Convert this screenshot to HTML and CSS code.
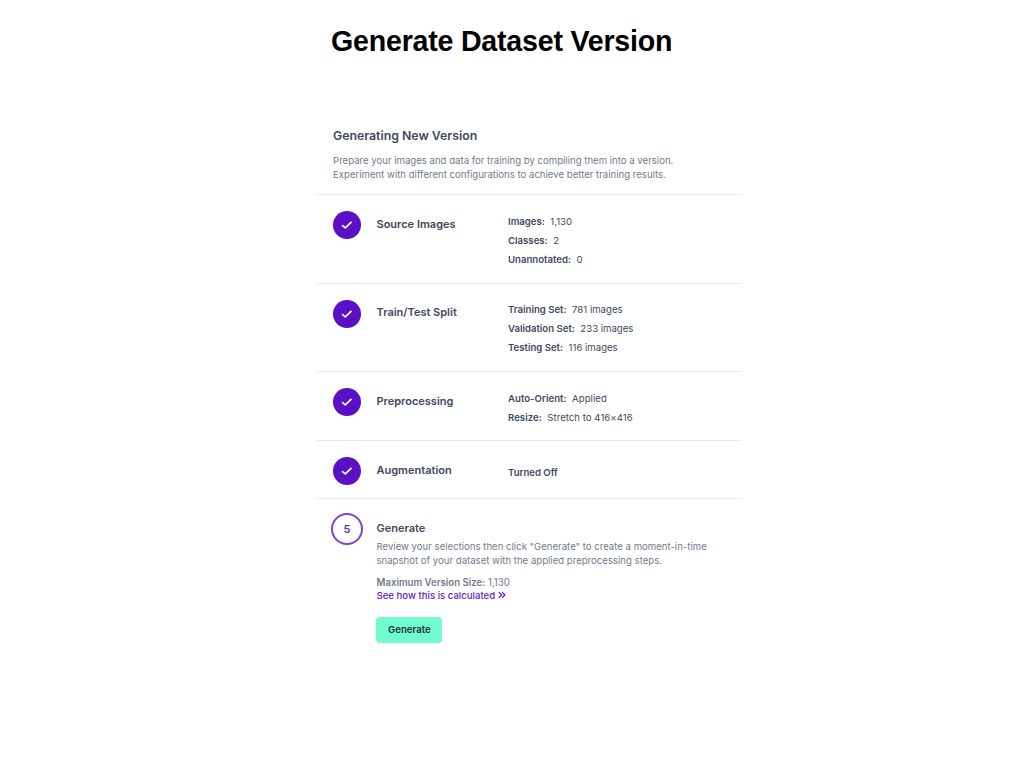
FILE: index.html
```html
<!DOCTYPE html>
<html lang="en">
<head>
<meta charset="utf-8">
<title>Generate Dataset Version</title>
<link rel="stylesheet" href="styles.css">
</head>
<body>
<h1 class="title"><span>Generate Dataset Version</span></h1>
<main class="panel">
  <header class="intro">
    <h2 class="heading"><span>Generating New Version</span></h2>
    <p class="copy"><span>Prepare your images and data for training by compiling them into a version.</span><br><span>Experiment with different configurations to achieve better training results.</span></p>
  </header>
  <section class="step tall">
    <div class="badge"><svg class="check" viewBox="0 0 12 10"><path d="M1.6 5.7 4.3 7.9 10 2.3"/></svg></div>
    <h3 class="name"><span>Source Images</span></h3>
    <ul class="facts"><li><b>Images:</b>1,130</li><li><b>Classes:</b>2</li><li><b>Unannotated:</b>0</li></ul>
  </section>
  <section class="step split">
    <div class="badge"><svg class="check" viewBox="0 0 12 10"><path d="M1.6 5.7 4.3 7.9 10 2.3"/></svg></div>
    <h3 class="name"><span>Train/Test Split</span></h3>
    <ul class="facts"><li><b>Training Set:</b>781 images</li><li><b>Validation Set:</b>233 images</li><li><b>Testing Set:</b>116 images</li></ul>
  </section>
  <section class="step medium">
    <div class="badge"><svg class="check" viewBox="0 0 12 10"><path d="M1.6 5.7 4.3 7.9 10 2.3"/></svg></div>
    <h3 class="name"><span>Preprocessing</span></h3>
    <ul class="facts"><li><b>Auto-Orient:</b>Applied</li><li><b>Resize:</b>Stretch to 416×416</li></ul>
  </section>
  <section class="step short">
    <div class="badge"><svg class="check" viewBox="0 0 12 10"><path d="M1.6 5.7 4.3 7.9 10 2.3"/></svg></div>
    <h3 class="name"><span>Augmentation</span></h3>
    <ul class="facts"><li><b>Turned Off</b></li></ul>
  </section>
  <section class="final">
    <div class="ring">5</div>
    <div class="details">
      <h3 class="name"><span>Generate</span></h3>
      <p class="copy"><span>Review your selections then click "Generate" to create a moment-in-time</span><br><span>snapshot of your dataset with the applied preprocessing steps.</span></p>
      <p class="size"><b>Maximum Version Size:</b> 1,130</p>
      <a class="link">See how this is calculated <svg class="chevrons" viewBox="0 0 8 8"><path d="M.8 1.1 3.7 4 .8 6.9M4 1.1 6.9 4 4 6.9"/></svg></a>
      <button class="generate">Generate</button>
    </div>
  </section>
</main>
</body>
</html>
```
FILE: styles.css
```css
* { box-sizing: border-box; }
body { margin: 0; background: #fff; font-family: Inter, "Liberation Sans", sans-serif; color: #414a5c; }
h1, h2, h3, p, ul { margin: 0; padding: 0; }
b { font-weight: 600; }
.title { height: 120px; padding: 24px 0 0 331px; font: bold 28.6px/34px "Liberation Sans", Arial, sans-serif; letter-spacing: -0.22px; color: #000; white-space: nowrap; }
.panel { width: 426px; margin-left: 316px; }
.intro { height: 75px; padding: 7px 0 0 17px; border-bottom: 1px solid #e9ebee; }
.heading { font-size: 12.3px; line-height: 17px; font-weight: 600; }
.copy { font-size: 9.6px; line-height: 13.7px; color: #737b8a; white-space: nowrap; }
.intro .copy { margin-top: 10px; }
.step { display: grid; grid-template-columns: 43.5px 131.5px 1fr; padding: 16px 0 0 17px; border-bottom: 1px solid #e9ebee; }
.tall { height: 88.5px; }
.split { height: 88.5px; }
.medium { height: 69px; }
.short { height: 58px; }
.badge { width: 28px; height: 28px; border-radius: 50%; background: #5b10c6; display: flex; align-items: center; justify-content: center; }
.check { width: 12px; height: 10px; fill: none; stroke: #fff; stroke-width: 1.7; stroke-linecap: round; stroke-linejoin: round; }
.name { font-size: 11px; line-height: 16px; font-weight: 600; }
.step .name { padding-top: 5px; }
.split .name { padding-top: 4px; }
.facts { list-style: none; font-size: 9.6px; line-height: 19px; padding-top: 1px; white-space: nowrap; }
.facts b { margin-right: 5.5px; }
.split .facts { padding-top: 0.4px; }
.medium .facts { letter-spacing: 0.03px; }
.short .facts { padding-top: 6px; }
.final { display: grid; grid-template-columns: 45.5px 1fr; padding: 14px 0 0 15px; }
.ring { width: 32px; height: 32px; border: 2px solid #7c43d2; border-radius: 50%; display: flex; align-items: center; justify-content: center; font-size: 11px; font-weight: 600; color: #6e2ccc; }
.details { padding-top: 6.5px; }
.details .copy { margin-top: 4.5px; }
.size { margin-top: 8.5px; font-size: 9.65px; line-height: 14px; color: #737b8a; }
.link { display: block; margin-top: -1px; font-size: 9.6px; line-height: 14px; font-weight: 550; color: #6420c9; }
.chevrons { width: 8px; height: 8px; fill: none; stroke: currentColor; stroke-width: 1.3; }
.generate { display: block; width: 66px; height: 26px; margin: 14.5px 0 0 -0.1px; padding: 0; border: 0; border-radius: 4px; background: #72fbd0; color: #17352f; font: 600 9.6px/14px Inter, sans-serif; }
```
